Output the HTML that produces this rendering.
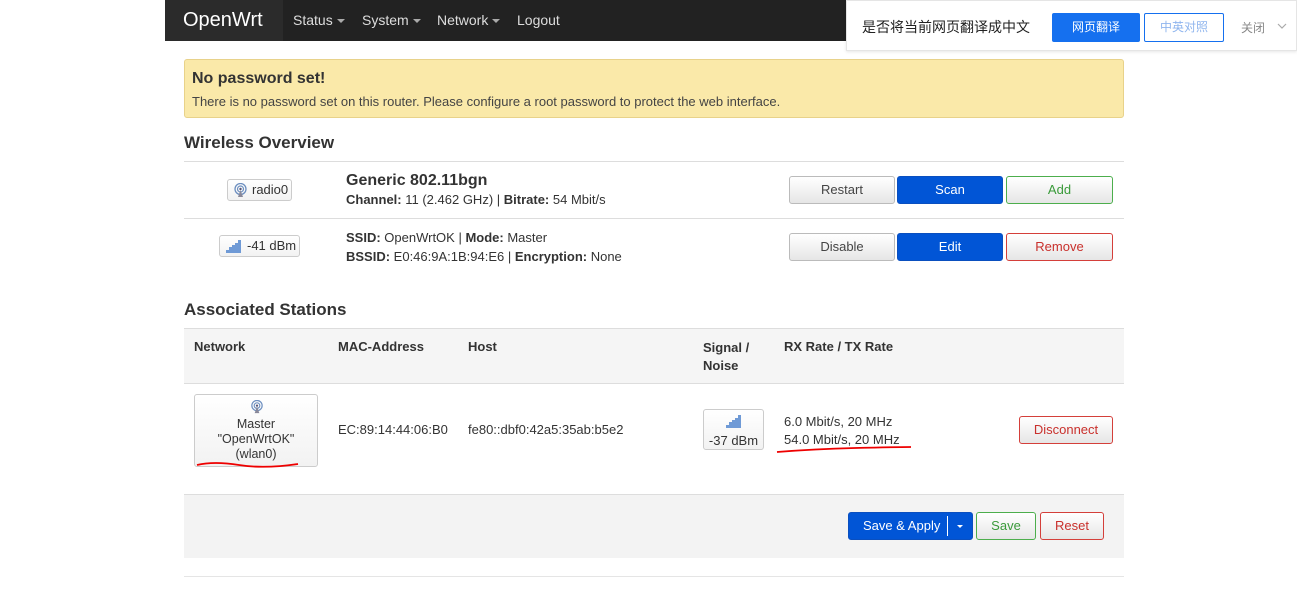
<!DOCTYPE html>
<html><head><meta charset="utf-8"><style>
*{box-sizing:border-box;margin:0;padding:0}
body{width:1297px;height:593px;overflow:hidden;background:#fff;font-family:"Liberation Sans",Arial,sans-serif;font-size:13px;color:#333;position:relative}
.a{position:absolute}
.nav{left:165px;top:0;width:1132px;height:41px;background:#222}
.brand{left:165px;top:0;width:118px;height:41px;background:#2b2b2b;color:#fff;font-size:20px;line-height:40px;padding-left:18px}
.ni{top:0;line-height:41px;color:#ddd;font-size:14px}
.car{display:inline-block;border-left:4px solid transparent;border-right:4px solid transparent;border-top:4px solid #aaa;vertical-align:middle;margin-left:4px}
.pop{left:846px;top:0;width:451px;height:51px;background:#fff;border:1px solid #e5e5e5;box-shadow:0 1px 3px rgba(0,0,0,.1)}
.cjk{font-family:"Liberation Sans","Noto Sans CJK SC",sans-serif}
.warn{left:184px;top:59px;width:940px;height:59px;background:#fae9a9;border:1px solid #e8d28a;border-radius:3px}
h3{font-size:17px;font-weight:bold;color:#333}
.line{left:184px;width:940px;height:1px;background:#ddd}
.btn{position:absolute;height:28px;border:1px solid #bbb;border-radius:3px;background:linear-gradient(#fff,#e6e6e6);text-align:center;line-height:26px;font-size:13px;color:#444}
.blue{background:#0155d6;border-color:#0a4fbf;color:#fff}
.green{border-color:#4cae4c;color:#3a9a3a}
.red{border-color:#d43f3a;color:#c9302c}
.badge{position:absolute;border:1px solid #ccc;border-radius:3px;background:linear-gradient(#fff,#f2f2f2);font-size:13px}
b{font-weight:bold}
</style></head><body>
<div class="a nav"></div>
<div class="a brand">OpenWrt</div>
<div class="a ni" style="left:293px">Status<span class="car"></span></div>
<div class="a ni" style="left:362px">System<span class="car"></span></div>
<div class="a ni" style="left:437px">Network<span class="car"></span></div>
<div class="a ni" style="left:517px">Logout</div>

<div class="a pop cjk">
 <div class="a" style="left:15px;top:16px;font-size:14px;color:#222">是否将当前网页翻译成中文</div>
 <div class="a" style="left:205px;top:12px;width:88px;height:29px;background:#1570ef;border-radius:2px;color:#fff;text-align:center;line-height:29px;font-size:12px">网页翻译</div>
 <div class="a" style="left:297px;top:12px;width:80px;height:29px;border:1px solid #1570ef;border-radius:2px;color:#8fb5ee;text-align:center;line-height:27px;font-size:12px">中英对照</div>
 <div class="a" style="left:394px;top:18px;color:#888;font-size:12px">关闭</div>
 <svg class="a" style="left:430px;top:22px" width="10" height="6" viewBox="0 0 10 6"><path d="M1 1 L5 5 L9 1" fill="none" stroke="#aaa" stroke-width="1.2"/></svg>
</div>

<div class="a warn">
 <div class="a" style="left:7px;top:10px;font-size:16px;font-weight:bold;color:#333">No password set!</div>
 <div class="a" style="left:7px;top:34px;font-size:13px;color:#444">There is no password set on this router. Please configure a root password to protect the web interface.</div>
</div>

<h3 class="a" style="left:184px;top:133px">Wireless Overview</h3>
<div class="a line" style="top:161px"></div>
<div class="a line" style="top:218px"></div>

<div class="badge" style="left:227px;top:179px;width:65px;height:22px;line-height:20px;padding-left:24px">
 <svg class="a" style="left:5px;top:3px" width="15" height="15" viewBox="0 0 15 15"><circle cx="7.5" cy="6" r="5.5" fill="none" stroke="#6d8fc0" stroke-width="1.3"/><circle cx="7.5" cy="6" r="3" fill="none" stroke="#6d8fc0" stroke-width="1.2"/><circle cx="7.5" cy="6" r="1.2" fill="#557"/><path d="M5 14 L7.5 7 L10 14Z" fill="#889"/></svg>radio0</div>
<div class="a" style="left:346px;top:172px;font-size:16px;font-weight:bold">Generic 802.11bgn</div>
<div class="a" style="left:346px;top:192px;font-size:13px"><b>Channel:</b> 11 (2.462 GHz) | <b>Bitrate:</b> 54 Mbit/s</div>
<div class="btn" style="left:789px;top:176px;width:106px">Restart</div>
<div class="btn blue" style="left:897px;top:176px;width:106px">Scan</div>
<div class="btn green" style="left:1006px;top:176px;width:107px">Add</div>

<div class="badge" style="left:219px;top:235px;width:81px;height:22px;line-height:20px;padding-left:27px">
 <svg class="a" style="left:6px;top:4px" width="16" height="13" viewBox="0 0 16 13"><path d="M0 13V10h3V7h3V5h3V3h3V0h3v13z" fill="#6f9ad6"/></svg>-41 dBm</div>
<div class="a" style="left:346px;top:230px"><b>SSID:</b> OpenWrtOK | <b>Mode:</b> Master</div>
<div class="a" style="left:346px;top:249px"><b>BSSID:</b> E0:46:9A:1B:94:E6 | <b>Encryption:</b> None</div>
<div class="btn" style="left:789px;top:233px;width:106px">Disable</div>
<div class="btn blue" style="left:897px;top:233px;width:106px">Edit</div>
<div class="btn red" style="left:1006px;top:233px;width:107px">Remove</div>

<h3 class="a" style="left:184px;top:300px">Associated Stations</h3>
<div class="a" style="left:184px;top:328px;width:940px;height:56px;background:#f5f5f5;border-top:1px solid #ddd;border-bottom:1px solid #ddd"></div>
<div class="a" style="left:194px;top:339px;font-weight:bold">Network</div>
<div class="a" style="left:338px;top:339px;font-weight:bold">MAC-Address</div>
<div class="a" style="left:468px;top:339px;font-weight:bold">Host</div>
<div class="a" style="left:703px;top:339px;font-weight:bold;line-height:18px">Signal /<br>Noise</div>
<div class="a" style="left:784px;top:339px;font-weight:bold">RX Rate / TX Rate</div>

<div class="badge" style="left:194px;top:394px;width:124px;height:73px;text-align:center;padding-top:22px;line-height:15px;font-size:12.5px">
 <svg class="a" style="left:55px;top:5px" width="14" height="14" viewBox="0 0 15 15"><circle cx="7.5" cy="6" r="5.5" fill="none" stroke="#6d8fc0" stroke-width="1.3"/><circle cx="7.5" cy="6" r="3" fill="none" stroke="#6d8fc0" stroke-width="1.2"/><circle cx="7.5" cy="6" r="1.2" fill="#557"/><path d="M5 14 L7.5 7 L10 14Z" fill="#889"/></svg>
 Master<br>"OpenWrtOK"<br>(wlan0)</div>
<svg class="a" style="left:194px;top:458px" width="110" height="14"><path d="M3 7 Q20 3 45 7 T104 6" fill="none" stroke="#e00" stroke-width="1.8"/></svg>
<div class="a" style="left:338px;top:422px">EC:89:14:44:06:B0</div>
<div class="a" style="left:468px;top:422px">fe80::dbf0:42a5:35ab:b5e2</div>
<div class="badge" style="left:703px;top:409px;width:61px;height:41px;text-align:center;padding-top:23px;line-height:15px">
 <svg class="a" style="left:22px;top:5px" width="16" height="13" viewBox="0 0 16 13"><path d="M0 13V10h3V7h3V5h3V3h3V0h3v13z" fill="#6f9ad6"/></svg>-37 dBm</div>
<div class="a" style="left:784px;top:413px;line-height:18px">6.0 Mbit/s, 20 MHz<br>54.0 Mbit/s, 20 MHz</div>
<svg class="a" style="left:775px;top:444px" width="140" height="12"><path d="M2 8 Q40 5 80 4 T136 3" fill="none" stroke="#e00" stroke-width="1.8"/></svg>
<div class="btn red" style="left:1019px;top:416px;width:94px">Disconnect</div>

<div class="a line" style="top:494px"></div>
<div class="a" style="left:184px;top:495px;width:940px;height:63px;background:#f3f3f3"></div>
<div class="btn blue" style="left:848px;top:512px;width:125px;text-align:left;padding-left:14px">Save &amp; Apply<span class="a" style="left:98px;top:3px;width:1px;height:20px;background:#fff"></span><span class="a" style="left:108px;top:12px;border-left:3px solid transparent;border-right:3px solid transparent;border-top:3px solid #fff"></span></div>
<div class="btn green" style="left:976px;top:512px;width:60px">Save</div>
<div class="btn red" style="left:1040px;top:512px;width:64px">Reset</div>
<div class="a line" style="top:576px;background:#e5e5e5"></div>
</body></html>
